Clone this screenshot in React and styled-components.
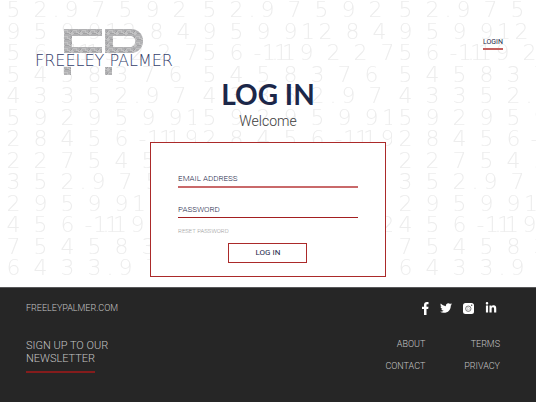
import React from "react";
import styled, { createGlobalStyle } from "styled-components";
import { FaTwitter, FaLinkedinIn } from "react-icons/fa";

const GlobalStyle = createGlobalStyle`
  * { box-sizing: border-box; }
  html, body, #root { height: 100%; }
  body {
    margin: 0;
    background: #fff;
    font-family: Roboto, "Liberation Sans", sans-serif;
    font-weight: 300;
  }
`;

const Page = styled.div`
  display: flex;
  flex-direction: column;
  min-height: 100%;
`;

const Top = styled.div`
  position: relative;
  overflow: hidden;
  padding-bottom: 10px;
`;

const Wallpaper = styled.svg`
  position: absolute;
  inset: 0;
  width: 100%;
  height: 280px;
`;

const Header = styled.header`
  position: relative;
  display: flex;
  justify-content: space-between;
  align-items: flex-start;
  padding: 28px 33px 0 24px;
`;

const LogoLink = styled.a`
  display: block;
  line-height: 0;
`;

const NavLink = styled.a`
  margin-top: 10px;
  padding-bottom: 1px;
  border-bottom: 2px solid #c4605f;
  color: #1c2749;
  font-size: 7px;
  line-height: 9px;
  font-weight: 400;
  text-decoration: none;
`;

const Main = styled.main`
  position: relative;
  display: flex;
  flex-direction: column;
  align-items: center;
`;

const Title = styled.h1`
  margin: 0;
  color: #1c2749;
  font: 700 28px/36px Lato, sans-serif;
`;

const Welcome = styled.p`
  margin: 0 0 12px;
  color: #3c3c3c;
  font-size: 14px;
  line-height: 18px;
`;

const LoginForm = styled.form`
  display: flex;
  flex-direction: column;
  align-items: center;
  width: 44%;
  min-width: 220px;
  padding: 28px 27px 13px;
  border: 1px solid #ab2a2a;
  background: #fff;
`;

const Field = styled.input`
  width: 100%;
  height: 17px;
  margin-bottom: ${(p) => (p.$last ? 8 : 13)}px;
  padding: 0;
  border: 0;
  border-bottom: ${(p) => (p.$last ? "1px solid #a31f20" : "2px solid #c9696a")};
  border-radius: 0;
  outline: 0;
  background: transparent;
  color: #1c2749;
  font: 300 8px/12px Roboto, sans-serif;
  &::placeholder { color: #1c2749; opacity: 1; }
`;

const ResetLink = styled.a`
  align-self: flex-start;
  margin-bottom: 8px;
  color: #9a9a9a;
  font-size: 6px;
  line-height: 9px;
  text-decoration: none;
`;

const Submit = styled.button`
  width: 79px;
  height: 20px;
  padding: 0;
  border: 1px solid #ab2a2a;
  background: #fff;
  color: #1c2749;
  font: 400 8px/12px Roboto, sans-serif;
`;

const Footer = styled.footer`
  flex: 1;
  padding: 12px 36px 20px 26px;
  border-top: 1px solid #58585a;
  background: #262626;
  color: #c4c4c4;
`;

const FooterRow = styled.div`
  display: flex;
  justify-content: space-between;
  align-items: flex-start;
`;

const Site = styled.a`
  color: inherit;
  font-size: 9px;
  line-height: 16px;
  text-decoration: none;
`;

const Social = styled.div`
  display: flex;
  align-items: center;
  gap: 11px;
  height: 16px;
  margin-right: 3px;
`;

const SocialLink = styled.a`
  display: flex;
  color: #fff;
`;

const Newsletter = styled.h2`
  margin: 23px 0 0;
  font-size: 11px;
  line-height: 13px;
  font-weight: 300;
  &::after {
    content: "";
    display: block;
    width: 69px;
    margin-top: 6px;
    border-top: 2px solid #851c1c;
  }
`;

const Links = styled.nav`
  display: grid;
  grid-template-columns: auto auto;
  justify-items: end;
  column-gap: 39px;
  row-gap: 10px;
  margin-top: 22px;
`;

const FooterLink = styled.a`
  color: inherit;
  font-size: 9px;
  line-height: 12px;
  text-decoration: none;
`;

const WallDigit = styled.text`
  fill: #ededed;
  font-family: "DejaVu Sans", sans-serif;
  font-size: 22px;
  font-weight: 200;
  text-anchor: middle;
`;

const Wordmark = styled.text`
  fill: #34406a;
  font-family: "DejaVu Sans", sans-serif;
  font-size: 16px;
  font-weight: 200;
  text-anchor: middle;
`;

const numberRows = [
  "52.97592",
  "95991284",
  "56-1.119227",
  "5458376",
  "43352.97",
  "59295991",
  "28456-1.119",
  "2275458",
  "352.9759",
  "29599128",
  "456-1.11922",
  "7545837",
  "6433.975",
];

const cellWidths = { 1: 8, ".": 4, "-": 15 };

function placeDigits(row) {
  let left = 0;
  return [...row].map((char) => {
    const width = cellWidths[char] || 27;
    const x = left + width / 2;
    left += width;
    return { char, x };
  });
}

function NumberWall() {
  return (
    <Wallpaper aria-hidden="true">
      <defs>
        <pattern id="numbers" width="196" height="282" patternUnits="userSpaceOnUse">
          {numberRows.map((row, i) =>
            placeDigits(row).map(({ char, x }) => (
              <WallDigit key={`${i}-${x}`} x={x} y={Math.round(17 + i * 21.5)}>{char}</WallDigit>
            ))
          )}
        </pattern>
      </defs>
      <rect width="100%" height="100%" fill="url(#numbers)" />
    </Wallpaper>
  );
}

function Logo() {
  return (
    <svg width="160" height="48" viewBox="-4 0 160 48" role="img" aria-label="Freeley Palmer">
      <defs>
        <pattern id="weave" width="9" height="6" patternUnits="userSpaceOnUse">
          <rect width="9" height="6" fill="#c2c2c3" />
          <path d="M0 1h5l2-1M6 2h3M0 4h3M4 3h4l-2 2M1 5.5h4" stroke="#98989b" strokeWidth=".8" fill="none" />
        </pattern>
      </defs>
      <g fill="url(#weave)">
        <path d="M36 1h38v7H44v11h30v6H36z" />
        <path d="M77 1h26c16 0 16 24 0 24H77zM85 8v11h17c7 0 7-11 0-11z" fillRule="evenodd" />
        <path d="M36 39h7v8h-7zM77 39h7v8h-7z" />
      </g>
      <Wordmark x="76" y="38">FREELEY PALMER</Wordmark>
    </svg>
  );
}

function FacebookIcon() {
  return (
    <svg width="7" height="13" viewBox="0 0 7 13" fill="#fff" aria-hidden="true">
      <path d="M2 13V7H0V4.700h2V3C2 1 3.100 0 4.900 0H6.500v2.200H5.300C4.600 2.200 4.500 2.600 4.500 3.100v1.600h2L6.200 7H4.500v6z" />
    </svg>
  );
}

function InstagramIcon() {
  return (
    <svg width="11" height="11" viewBox="0 0 11 11" aria-hidden="true">
      <rect width="11" height="11" rx="2.5" fill="#fff" />
      <circle cx="5.3" cy="5.7" r="2.7" fill="none" stroke="#444" strokeWidth=".7" />
      <circle cx="5.3" cy="5.7" r="1.2" fill="none" stroke="#999" strokeWidth=".5" />
      <circle cx="8.7" cy="2.3" r=".7" fill="#444" />
    </svg>
  );
}

export default function App() {
  return (
    <>
      <GlobalStyle />
      <Page>
        <Top>
          <NumberWall />
          <Header>
            <LogoLink href="#home"><Logo /></LogoLink>
            <NavLink href="#login">LOGIN</NavLink>
          </Header>
          <Main>
            <Title>LOG IN</Title>
            <Welcome>Welcome</Welcome>
            <LoginForm onSubmit={(e) => e.preventDefault()}>
              <Field type="email" aria-label="Email address" placeholder="EMAIL ADDRESS" />
              <Field type="password" aria-label="Password" placeholder="PASSWORD" $last />
              <ResetLink href="#reset">RESET PASSWORD</ResetLink>
              <Submit type="submit">LOG IN</Submit>
            </LoginForm>
          </Main>
        </Top>
        <Footer>
          <FooterRow>
            <Site href="#site">FREELEYPALMER.COM</Site>
            <Social>
              <SocialLink href="#facebook" aria-label="Facebook"><FacebookIcon /></SocialLink>
              <SocialLink href="#twitter" aria-label="Twitter"><FaTwitter size={12} /></SocialLink>
              <SocialLink href="#instagram" aria-label="Instagram"><InstagramIcon /></SocialLink>
              <SocialLink href="#linkedin" aria-label="LinkedIn"><FaLinkedinIn size={12} /></SocialLink>
            </Social>
          </FooterRow>
          <FooterRow>
            <Newsletter>SIGN UP TO OUR<br />NEWSLETTER</Newsletter>
            <Links aria-label="Footer">
              <FooterLink href="#about">ABOUT</FooterLink>
              <FooterLink href="#terms">TERMS</FooterLink>
              <FooterLink href="#contact">CONTACT</FooterLink>
              <FooterLink href="#privacy">PRIVACY</FooterLink>
            </Links>
          </FooterRow>
        </Footer>
      </Page>
    </>
  );
}
